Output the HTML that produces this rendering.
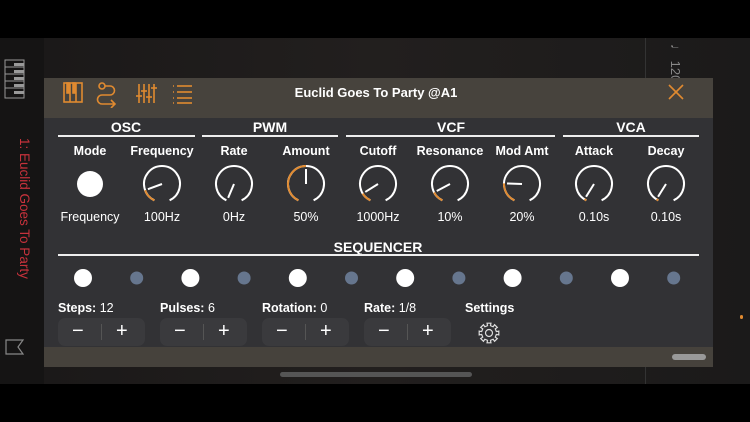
<!DOCTYPE html>
<html><head><meta charset="utf-8"><style>
body{margin:0;width:750px;height:422px;background:#000;position:relative;overflow:hidden;font-family:"Liberation Sans",Arial,sans-serif;color:#fff}
.abs{position:absolute}
.t{position:absolute;transform:translateX(-50%);white-space:nowrap;font-size:12.5px}
.b{font-weight:bold}
.sec{position:absolute;height:2px;background:#eee;top:135px}
.grp{position:absolute;top:318px;width:87px;height:28px;background:#3a3a3d;border-radius:7px}
.grp span{position:absolute;top:2px;font-size:20px;color:#fff}
.grp i{position:absolute;left:43px;top:6px;width:1px;height:16px;background:#555}
.lb{position:absolute;top:301px;font-size:12.5px;font-weight:bold}
.lb em{font-style:normal;font-weight:normal}
</style></head><body>
<div class="abs" style="left:0;top:38px;width:750px;height:346px;background:linear-gradient(90deg,#1a1818,#221f1e 50%,#1b1a1a)"></div>
<div class="abs" style="left:0;top:38px;width:44px;height:346px;background:#151414"></div>
<div class="abs" style="left:645px;top:38px;width:1px;height:346px;background:#333"></div>
<svg class="abs" style="left:4px;top:59px" width="22" height="40"><rect x="1" y="1" width="19" height="38" fill="none" stroke="#999" stroke-width="1"/><g stroke="#999"><line x1="1" y1="8" x2="20" y2="8"/><line x1="1" y1="15" x2="20" y2="15"/><line x1="1" y1="22" x2="20" y2="22"/><line x1="1" y1="29" x2="20" y2="29"/></g><g fill="#999"><rect x="10" y="4" width="10" height="3"/><rect x="10" y="11" width="10" height="3"/><rect x="10" y="18" width="10" height="3"/><rect x="10" y="25" width="10" height="3"/><rect x="10" y="32" width="10" height="3"/></g></svg>
<div class="abs" style="left:14px;top:138px;transform-origin:0 0;transform:translateX(18px) rotate(90deg);color:#c7323c;font-size:13.5px;white-space:nowrap">1: Euclid Goes To Party</div>
<svg class="abs" style="left:5px;top:339px" width="20" height="16"><path d="M1 1H18L13 8L18 15H1Z" fill="none" stroke="#888" stroke-width="1.2"/></svg>
<div class="abs" style="left:667px;top:44px;transform-origin:0 0;transform:translateX(16px) rotate(90deg);color:#888;font-size:13px;white-space:nowrap">♩ 120</div>
<div class="abs" style="left:740px;top:315px;width:3px;height:4px;background:#e08a30;border-radius:2px"></div>
<div class="abs" style="left:280px;top:372px;width:192px;height:5px;background:#555;border-radius:3px"></div>

<div class="abs" style="left:44px;top:78px;width:669px;height:289px;background:#323235"></div>
<div class="abs" style="left:44px;top:78px;width:669px;height:40px;background:#47433d"></div>
<div class="abs" style="left:44px;top:347px;width:669px;height:20px;background:#46423c"></div>
<div class="abs" style="left:672px;top:354px;width:34px;height:6px;background:#999;border-radius:3px"></div>

<svg class="abs" style="left:60px;top:80px" width="140" height="28" fill="none" stroke="#e08a30" stroke-width="1.6">
<rect x="4" y="3" width="18" height="19"/><line x1="10" y1="3" x2="10" y2="22"/><line x1="16" y1="3" x2="16" y2="22"/>
<rect x="7" y="3" width="2" height="10" fill="#e08a30"/><rect x="13" y="3" width="2" height="10" fill="#e08a30"/>
<circle cx="42" cy="6" r="3"/><path d="M45 6H50a4.5 4.5 0 0 1 0 9H42a4.5 4.5 0 0 0 0 9H55M51 20l4 4-4 4"/>
<g><line x1="79" y1="4" x2="79" y2="23"/><line x1="84" y1="4" x2="84" y2="23"/><line x1="89" y1="4" x2="89" y2="23"/><line x1="94" y1="4" x2="94" y2="23"/><line x1="76" y1="16" x2="82" y2="16"/><line x1="81" y1="11" x2="87" y2="11"/><line x1="86" y1="17" x2="92" y2="17"/><line x1="91" y1="8" x2="97" y2="8"/></g>
<g><line x1="113" y1="6" x2="114" y2="6"/><line x1="117" y1="6" x2="132" y2="6"/><line x1="113" y1="12" x2="114" y2="12"/><line x1="117" y1="12" x2="132" y2="12"/><line x1="113" y1="18" x2="114" y2="18"/><line x1="117" y1="18" x2="132" y2="18"/><line x1="113" y1="23" x2="114" y2="23"/><line x1="117" y1="23" x2="132" y2="23"/></g>
</svg>
<div class="t b" style="left:376px;top:85px;font-size:13px">Euclid Goes To Party @A1</div>
<svg class="abs" style="left:668px;top:84px" width="16" height="16" stroke="#e08a30" stroke-width="1.6"><line x1="1" y1="1" x2="15" y2="15"/><line x1="15" y1="1" x2="1" y2="15"/></svg>

<div class="t b" style="left:126px;top:119px;font-size:14px">OSC</div>
<div class="t b" style="left:270px;top:119px;font-size:14px">PWM</div>
<div class="t b" style="left:451px;top:119px;font-size:14px">VCF</div>
<div class="t b" style="left:631px;top:119px;font-size:14px">VCA</div>
<div class="sec" style="left:58px;width:137px"></div>
<div class="sec" style="left:202px;width:136px"></div>
<div class="sec" style="left:346px;width:209px"></div>
<div class="sec" style="left:563px;width:136px"></div>

<div class="t b" style="left:90px;top:144px">Mode</div>
<div class="t b" style="left:162px;top:144px">Frequency</div>
<div class="t b" style="left:234px;top:144px">Rate</div>
<div class="t b" style="left:306px;top:144px">Amount</div>
<div class="t b" style="left:378px;top:144px">Cutoff</div>
<div class="t b" style="left:450px;top:144px">Resonance</div>
<div class="t b" style="left:522px;top:144px">Mod Amt</div>
<div class="t b" style="left:594px;top:144px">Attack</div>
<div class="t b" style="left:666px;top:144px">Decay</div>

<div class="t" style="left:90px;top:210px">Frequency</div>
<div class="t" style="left:162px;top:210px">100Hz</div>
<div class="t" style="left:234px;top:210px">0Hz</div>
<div class="t" style="left:306px;top:210px">50%</div>
<div class="t" style="left:378px;top:210px">1000Hz</div>
<div class="t" style="left:450px;top:210px">10%</div>
<div class="t" style="left:522px;top:210px">20%</div>
<div class="t" style="left:594px;top:210px">0.10s</div>
<div class="t" style="left:666px;top:210px">0.10s</div>

<svg class="abs" style="left:0;top:0" width="750" height="422" id="k">
<circle cx="90" cy="184" r="13" fill="#fff"/>
</svg>

<div class="t b" style="left:378px;top:239px;font-size:14px">SEQUENCER</div>
<div class="sec" style="left:58px;width:641px;top:254px"></div>

<div class="lb" style="left:58px">Steps: <em>12</em></div>
<div class="lb" style="left:160px">Pulses: <em>6</em></div>
<div class="lb" style="left:262px">Rotation: <em>0</em></div>
<div class="lb" style="left:364px">Rate: <em>1/8</em></div>
<div class="lb" style="left:465px">Settings</div>
<div class="grp" style="left:58px"><span style="left:14px">−</span><i></i><span style="left:58px">+</span></div>
<div class="grp" style="left:160px"><span style="left:14px">−</span><i></i><span style="left:58px">+</span></div>
<div class="grp" style="left:262px"><span style="left:14px">−</span><i></i><span style="left:58px">+</span></div>
<div class="grp" style="left:364px"><span style="left:14px">−</span><i></i><span style="left:58px">+</span></div>
<svg class="abs" style="left:477px;top:321px" width="24" height="24" viewBox="-12 -12 24 24" fill="none" stroke="#ddd" stroke-width="1.2">
<path id="g"/><circle r="3.5"/></svg>
<script>
var s=document.getElementById('k'),h='';
function P(cx,cy,r,a){a=a*Math.PI/180;return [cx+r*Math.cos(a),cy-r*Math.sin(a)];}
function arc(cx,cy,r,a1,a2,c){var p=P(cx,cy,r,a1),q=P(cx,cy,r,a2),l=(a1-a2)>180?1:0;return '<path d="M'+p[0]+' '+p[1]+'A'+r+' '+r+' 0 '+l+' 1 '+q[0]+' '+q[1]+'" fill="none" stroke="'+c+'" stroke-width="2"/>';}
[[162,200],[234,247],[306,90],[378,212],[450,208],[522,178],[594,238],[666,238]].forEach(function(k){
var x=k[0],y=184,r=18,v=k[1];
h+=arc(x,y,r,245,-65,'#fff');
if(v<244)h+=arc(x,y,r,245,v,'#e08a30');
var e=P(x,y,r-3,v);h+='<line x1="'+x+'" y1="'+y+'" x2="'+e[0]+'" y2="'+e[1]+'" stroke="#fff" stroke-width="2"/>';});
for(var i=0;i<12;i++){var x=83+i*53.7;h+= i%2==0?'<circle cx="'+x+'" cy="278" r="9" fill="#fff"/>':'<circle cx="'+x+'" cy="278" r="6.5" fill="#66768e"/>';}
s.innerHTML+=h;
var g='';for(var j=0;j<16;j++){var a=(j*22.5-11.25)*Math.PI/180,r=(j%2==0)?10:7.5;g+=(j?'L':'M')+(r*Math.cos(a)).toFixed(2)+' '+(r*Math.sin(a)).toFixed(2);var a2=(j*22.5+11.25)*Math.PI/180;g+='L'+(r*Math.cos(a2)).toFixed(2)+' '+(r*Math.sin(a2)).toFixed(2);}
document.getElementById('g').setAttribute('d',g+'Z');
</script>
</body></html>
